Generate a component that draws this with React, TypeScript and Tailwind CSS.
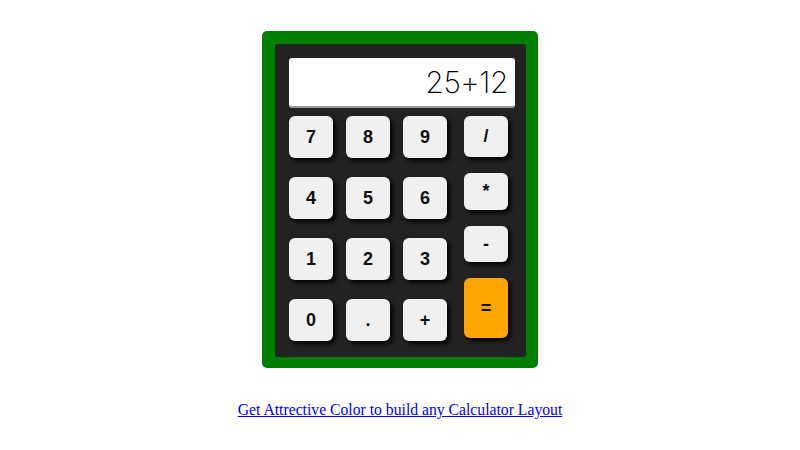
import React from "react";

const Key = ({ label, h = "h-[42px]", orange = false }: { label: string; h?: string; orange?: boolean }) => (
  <button
    className={`${h} w-[44px] rounded-[6px] ${orange ? "bg-[#ffa500]" : "bg-[#f0f0f0]"} shadow-[3px_3px_4px_rgba(0,0,0,0.9)] text-[18px] font-bold text-[#111] flex items-center justify-center font-['Liberation_Sans',Arial,sans-serif]`}
  >
    {label}
  </button>
);

export default function App() {
  const rows = [
    ["7", "8", "9"],
    ["4", "5", "6"],
    ["1", "2", "3"],
    ["0", ".", "+"],
  ];
  return (
    <div className="w-[800px] h-[450px] bg-white flex flex-col items-center">
      <div className="mt-[31px] w-[276px] h-[337px] bg-[#008000] rounded-[5px] pt-[13px] pl-[13px] pr-[12px] pb-[11px]">
        <div className="w-full h-full bg-[#222222] rounded-[3px] pt-[14px] px-[14px]">
          <div className="w-[226px] h-[50px] bg-white rounded-[3px] border-b-2 border-[#9a9a9a] flex items-center justify-end pr-[7px]">
            <span className="text-[30px] font-extralight text-black tracking-[-0.5px] leading-none font-['Inter','DejaVu_Sans',sans-serif]">
              25+12
            </span>
          </div>
          <div className="flex mt-[8px]">
            <div className="flex flex-col gap-[19px]">
              {rows.map((r, i) => (
                <div key={i} className="flex gap-[13px]">
                  {r.map((k) => (
                    <Key key={k} label={k} />
                  ))}
                </div>
              ))}
            </div>
            <div className="flex flex-col gap-[16px] ml-[17px]">
              <Key label="/" h="h-[41px]" />
              <Key label="*" h="h-[37px]" />
              <Key label="-" h="h-[36px]" />
              <Key label="=" h="h-[60px]" orange />
            </div>
          </div>
        </div>
      </div>
      <a
        href="#"
        className="mt-[30px] text-[15.7px] text-[#0000ee] underline font-['Liberation_Serif','Times_New_Roman',serif]"
      >
        Get Attrective Color to build any Calculator Layout
      </a>
    </div>
  );
}
